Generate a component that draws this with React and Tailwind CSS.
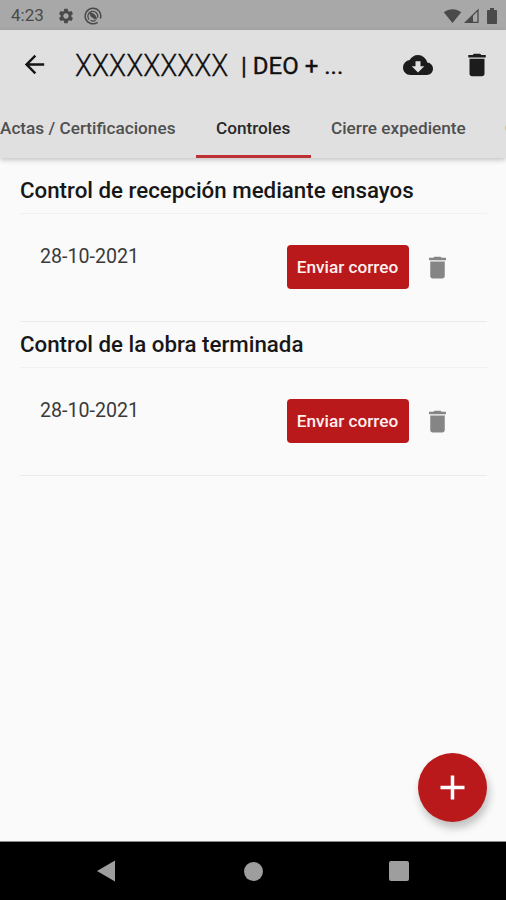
import { MdArrowBack, MdCloudDownload, MdDelete, MdSettings } from 'react-icons/md';

const tabs = [
  { label: 'Actas / Certificaciones', width: 'w-[196px]', padding: '' },
  { label: 'Controles', width: 'w-[115px]', padding: 'pl-[20px]' },
  { label: 'Cierre expediente', width: 'w-[175px]', padding: 'pl-[20px]' },
  { label: 'Control', width: 'w-[115px]', padding: 'pl-[19px]' },
];

const controls = [
  { title: 'Control de recepción mediante ensayos', date: '28-10-2021' },
  { title: 'Control de la obra terminada', date: '28-10-2021' },
];

const StatusBar = () => (
  <div className="flex h-[30px] shrink-0 items-center bg-[#a8a8a8] pt-px text-[#4a4a4a]">
    <span className="ml-[11px] w-[46px] pt-px text-[17px]">4:23</span>
    <MdSettings className="h-[18px] w-[18px]" />
    {/* Circled notification badge */}
    <svg className="ml-[9px] h-[18px] w-[18px]" viewBox="0 0 18 18" fill="none" stroke="currentColor">
      <path d="M13.6 15.300A7.800 7.800 0 1 1 16.400 11.400" strokeWidth="1.500" />
      <path d="M5 12.600A5 5 0 1 1 13.600 10.800" strokeWidth="1.300" />
      <path d="M6.600 13.400A5 5 0 0 0 11.600 13.300" strokeWidth="1.300" />
      <path d="M5 5.600C8.500 5 12 7 13 12.400L10.400 12.200 6.800 9.400z" fill="currentColor" stroke="none" />
    </svg>
    <svg className="ml-auto h-[16px] w-[19px]" viewBox="0 0 19 16" fill="currentColor">
      <path d="M0.800 4.200C6 .2 13 .2 18.200 4.200L9.500 15z" />
    </svg>
    <svg className="ml-[2px] h-[16px] w-[15px]" viewBox="0 0 15 16">
      <path d="M14 2v12.300H1.600z" fill="none" stroke="currentColor" strokeWidth="1.300" />
      <path d="M9 6.800V15H.5z" fill="currentColor" />
    </svg>
    <svg className="mr-[9px] ml-[8px] h-[16px] w-[10px]" viewBox="0 0 10 16" fill="currentColor">
      <path d="M3 0h4v2h2.200c.5 0 .8.300.8.800v12.400c0 .5-.3.800-.8.800H.8c-.5 0-.8-.3-.8-.8V2.800C0 2.300.3 2 .8 2H3z" />
    </svg>
  </div>
);

const AppBar = () => (
  <header className="z-10 shrink-0 bg-[#e0e0e0] shadow-[0_2px_5px_rgba(0,0,0,0.22)]">
    <div className="flex h-[69px] items-center">
      <button className="ml-[20px] text-[#151515]">
        <MdArrowBack className="h-[29px] w-[29px]" />
      </button>
      <h1 className="ml-[26px] flex items-center whitespace-nowrap text-[#111111]">
        <span className="w-[166px] pt-px">
          <span className="inline-block origin-left scale-x-[0.87] text-[32px] leading-[40px] font-light [-webkit-text-stroke:0.3px]">
            XXXXXXXXX
          </span>
        </span>
        <span className="pt-[2px] text-[24px] font-normal [-webkit-text-stroke:0.35px]">| DEO + ...</span>
      </h1>
      <button className="mr-[29px] ml-auto text-[#1c1c1c]">
        <MdCloudDownload className="h-[30px] w-[30px]" />
      </button>
      <button className="mr-[14px] text-[#1c1c1c]">
        <MdDelete className="h-[30px] w-[30px]" />
      </button>
    </div>
    <nav className="flex h-[59px] overflow-hidden">
      {tabs.map((tab) => {
        const active = tab.label === 'Controles';
        return (
          <button
            key={tab.label}
            className={`flex shrink-0 items-center border-b-[3px] pt-[3px] text-[17.2px] font-medium whitespace-nowrap ${tab.width} ${tab.padding} ${
              active ? 'border-[#bf3035] text-[#292929]' : 'border-transparent text-[#4f4f4f]'
            }`}
          >
            {tab.label}
          </button>
        );
      })}
    </nav>
  </header>
);

const ControlSection = ({ title, date }) => (
  <section>
    <h2 className="flex h-[46px] items-center border-b border-[#f0f0f0] pt-px text-[22.3px] font-medium whitespace-nowrap text-[#171717]">
      {title}
    </h2>
    <div className="flex h-[108px] items-center border-b border-[#ebebeb] pb-px pl-[20px]">
      <span className="mb-[21px] text-[19.6px] text-[#3a3a3a]">{date}</span>
      <button className="mr-[14px] ml-auto h-[44px] w-[122px] rounded-[4px] bg-[#b9191b] pt-[2px] pr-px text-[17.2px] font-medium whitespace-nowrap text-[#fff0f0]">
        Enviar correo
      </button>
      <button className="mr-[35px] text-[#858585]">
        <MdDelete className="h-[29px] w-[29px]" />
      </button>
    </div>
  </section>
);

const NavigationBar = () => (
  <div className="flex h-[59px] shrink-0 items-center border-t border-[#8a8a8a] bg-black text-[#9e9e9e]">
    <svg className="ml-[96px] h-[22px] w-[20px]" viewBox="0 0 20 22" fill="currentColor">
      <path d="M19 .5v21L1 11z" />
    </svg>
    <span className="ml-[128px] h-[19px] w-[19px] rounded-full bg-[#9e9e9e]" />
    <span className="ml-[126px] h-[20px] w-[20px] rounded-[2px] bg-[#9e9e9e]" />
  </div>
);

const App = () => {
  return (
    <div className="relative flex h-[900px] w-[506px] flex-col overflow-hidden bg-[#fafafa] font-[Roboto,sans-serif]">
      <StatusBar />
      <AppBar />
      <main className="flex-1 pt-[10px] pr-[19px] pl-[20px]">
        {controls.map((control) => (
          <ControlSection key={control.title} title={control.title} date={control.date} />
        ))}
      </main>
      <button className="absolute right-[19px] bottom-[78px] flex h-[69px] w-[69px] items-center justify-center rounded-full bg-[#b9191b] text-white shadow-[2px_6px_9px_rgba(0,0,0,0.24)]">
        <svg className="h-[25px] w-[25px]" viewBox="0 0 25 25" stroke="currentColor" strokeWidth="3.500">
          <path d="M12.500.5v24M.5 12.500h24" />
        </svg>
      </button>
      <NavigationBar />
    </div>
  );
};

export default App;
